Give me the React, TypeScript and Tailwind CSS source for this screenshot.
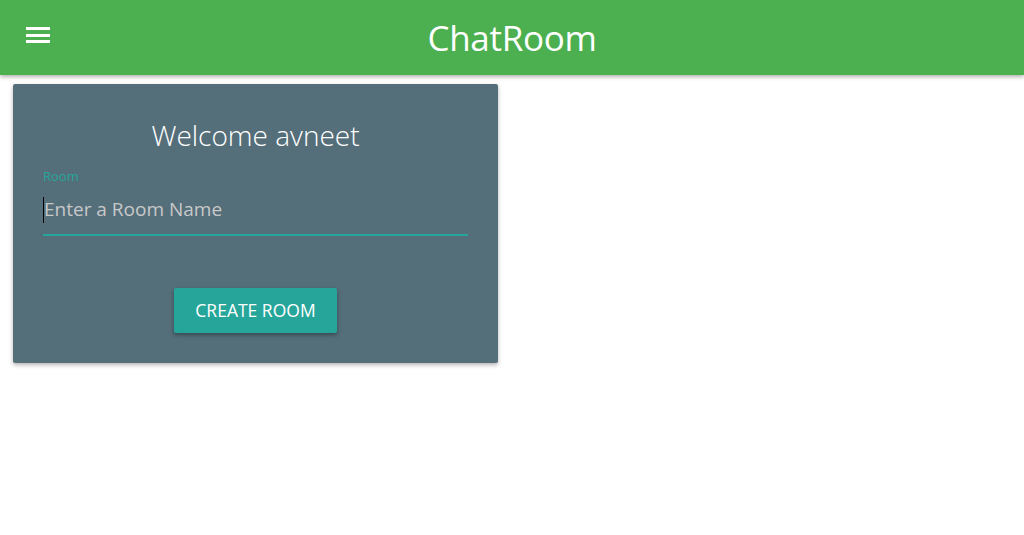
import React from "react";

export default function App() {
  return (
    <div className="min-h-[535px] w-full bg-white" style={{ fontFamily: '"Open Sans", "Noto Sans", sans-serif' }}>
      <header className="relative flex h-[75px] w-full items-center justify-center bg-[#4caf50] shadow-[0_2px_4px_rgba(0,0,0,0.3)]">
        <button className="absolute left-[26px] top-[27px] flex h-[16px] w-[24px] flex-col justify-between">
          <span className="block h-[3px] w-full bg-white" />
          <span className="block h-[3px] w-full bg-white" />
          <span className="block h-[3px] w-full bg-white" />
        </button>
        <h1 className="text-[35px] font-normal leading-none tracking-[-0.3px] text-white">ChatRoom</h1>
      </header>
      <div className="px-[13px] pt-[9px]">
        <div className="flex h-[279px] w-[485px] flex-col rounded-[2px] bg-[#546e7a] px-[30px] shadow-[0_2px_4px_rgba(0,0,0,0.3)]">
          <h2 className="mt-[33px] text-center text-[28px] font-light leading-[36px] text-white">Welcome avneet</h2>
          <label className="mt-[16px] text-[13px] leading-[14px] text-[#26a69a]">Room</label>
          <div className="mt-[8px] flex h-[45px] items-end border-b-2 border-[#26a69a] pb-[12px]">
            <span className="mb-[-1px] h-[26px] w-px bg-black" />
            <span className="text-[19px] leading-[26px] text-[#c8c8c8]">Enter a Room Name</span>
          </div>
          <div className="mt-[52px] flex justify-center">
            <button className="h-[45px] w-[163px] rounded-[2px] bg-[#26a69a] text-[17.5px] uppercase text-white shadow-[0_2px_4px_rgba(0,0,0,0.35)]">
              Create Room
            </button>
          </div>
        </div>
      </div>
    </div>
  );
}
